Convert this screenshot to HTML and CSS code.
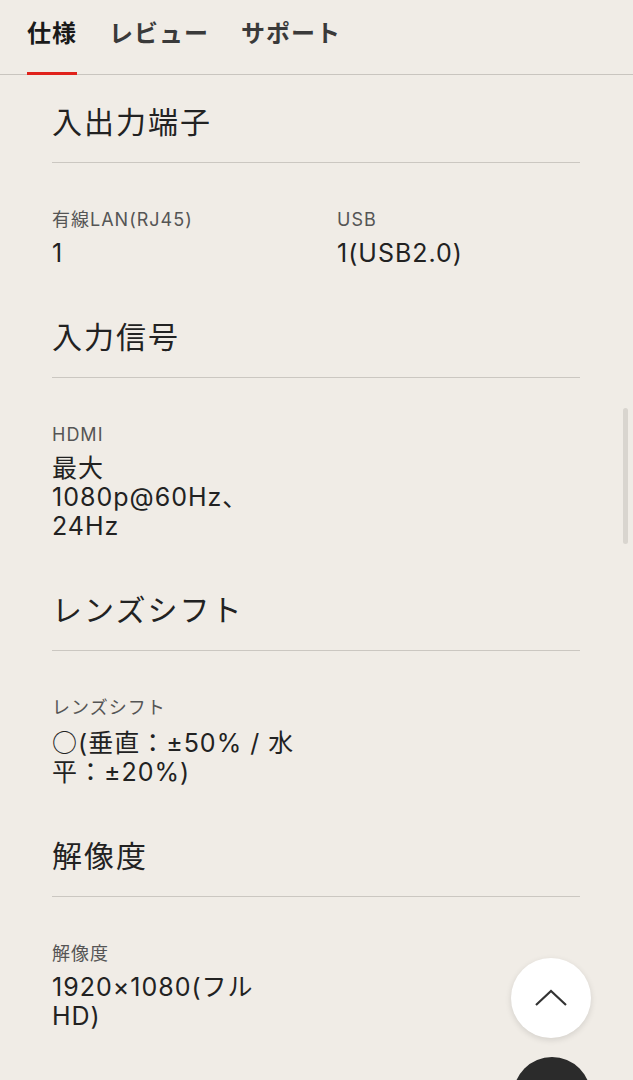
FILE: index.html
```html
<!DOCTYPE html>
<html lang="ja">
<head>
  <meta charset="UTF-8">
  <title>仕様</title>
  <link rel="stylesheet" href="styles.css">
</head>
<body>
  <nav class="tabs">
    <a class="tab active">仕様</a>
    <a class="tab">レビュー</a>
    <a class="tab">サポート</a>
  </nav>

  <main class="specs">
    <section class="spec-section">
      <h3 class="spec-title">入出力端子</h3>
      <div class="spec-grid">
        <div class="spec-item">
          <div class="spec-label">有線LAN(RJ45)</div>
          <div class="spec-value">1</div>
        </div>
        <div class="spec-item">
          <div class="spec-label">USB</div>
          <div class="spec-value">1(USB2.0)</div>
        </div>
      </div>
    </section>

    <section class="spec-section">
      <h3 class="spec-title">入力信号</h3>
      <div class="spec-grid">
        <div class="spec-item">
          <div class="spec-label">HDMI</div>
          <div class="spec-value">最大1080p@60Hz、24Hz</div>
        </div>
      </div>
    </section>

    <section class="spec-section">
      <h3 class="spec-title">レンズシフト</h3>
      <div class="spec-grid">
        <div class="spec-item">
          <div class="spec-label">レンズシフト</div>
          <div class="spec-value"><span class="mark">○</span>(垂直：±50% / 水平：±20%)</div>
        </div>
      </div>
    </section>

    <section class="spec-section">
      <h3 class="spec-title">解像度</h3>
      <div class="spec-grid">
        <div class="spec-item">
          <div class="spec-label">解像度</div>
          <div class="spec-value">1920×1080(フルHD)</div>
        </div>
      </div>
    </section>
  </main>

  <div class="scrollbar"></div>

  <button type="button" class="to-top" title="ページトップへ">
    <svg width="34" height="20" viewBox="0 0 34 20"><polyline points="2,17 17,3 32,17" fill="none" stroke="#333" stroke-width="2.2"/></svg>
  </button>
  <button type="button" class="chat-button"></button>
</body>
</html>
```

FILE: styles.css
```css
body { margin: 0; background: #f0ece6; color: #222; font-family: Inter, "Noto Sans CJK JP", sans-serif; }
.tabs { display: flex; gap: 32px; padding: 0 27px; height: 74px; border-bottom: 1px solid #c9c5bf; }
.tab { box-sizing: border-box; height: 75px; margin-bottom: -1px; font-family: "Noto Sans CJK JP", sans-serif; font-size: 24px; font-weight: bold; letter-spacing: 1px; line-height: 34px; padding-top: 15px; color: #3a3a3a; border-bottom: 3px solid transparent; }
.tab.active { color: #1a1a1a; border-bottom-color: #e0221b; }
.specs { padding: 25px 53px 0 52px; }
.spec-title { margin: 0; font-family: "Noto Sans CJK JP", sans-serif; font-size: 30px; font-weight: normal; letter-spacing: 2px; line-height: 40px; padding-bottom: 22px; border-bottom: 1px solid #cbc7c1; }
.spec-grid { display: grid; grid-template-columns: 1fr 1fr; column-gap: 42px; padding: 45px 0 47px; }
.spec-label { font-size: 18px; letter-spacing: 1px; line-height: 24px; color: #555; }
.spec-value { margin-top: 7px; font-size: 25px; letter-spacing: 1px; line-height: 29px; }
.mark { font-family: "Noto Sans CJK JP", sans-serif; }
.scrollbar { position: fixed; right: 5px; top: 408px; width: 5px; height: 136px; border-radius: 3px; background: #d9d5cf; }
.to-top { position: fixed; left: 511px; top: 958px; width: 80px; height: 80px; border: none; border-radius: 50%; background: #fff; box-shadow: 0 2px 6px rgba(0,0,0,0.12); display: flex; align-items: center; justify-content: center; padding: 0; }
.chat-button { position: fixed; left: 513px; top: 1057px; width: 78px; height: 78px; border: none; border-radius: 50%; background: #2b2b2b; }
```
